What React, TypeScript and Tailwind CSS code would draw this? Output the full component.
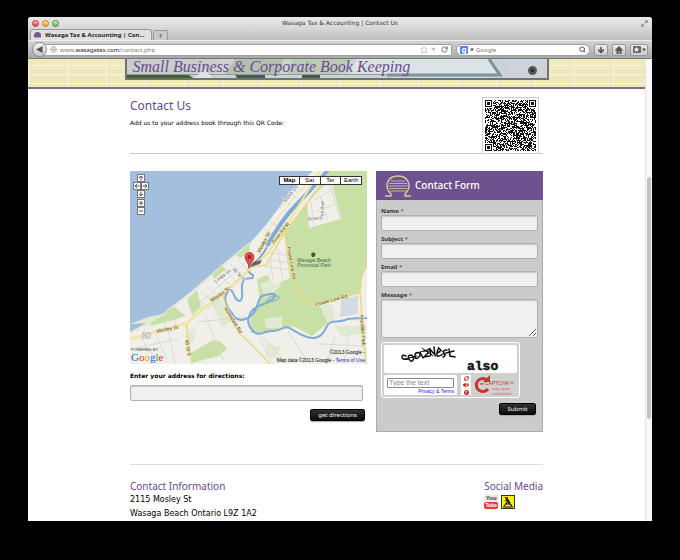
import React from "react";
import { ArrowDown, Home, Search, RotateCw, Star, Globe, Maximize2, RefreshCw, Volume2 } from "lucide-react";

const SANS = "font-['Noto_Sans',sans-serif]";
const inputBox =
  "block w-full rounded-[2px] border border-[#aeb1b4] bg-[#f0f0f0] px-1 text-[7px] text-[#333] shadow-[inset_0_1px_1px_#c5cbd0] outline-none";
const darkButton =
  "h-3 rounded-[2px] border border-black bg-gradient-to-b from-[#333] to-[#0c0c0c] text-[6px] leading-[10px] text-[#f4f4f4] shadow-[0_1px_1px_#aaa]";

function qrPath() {
  const n = 51;
  let seed = 91;
  let d = "";
  for (let y = 0; y < n; y++) {
    for (let x = 0; x < n; x++) {
      seed ^= seed << 13;
      seed ^= seed >>> 17;
      seed ^= seed << 5;
      const fx = x < 8 ? x : x > n - 9 ? n - 1 - x : -1;
      const fy = y < 8 ? y : y > n - 9 ? n - 1 - y : -1;
      const finder = fx >= 0 && fy >= 0 && !(x > 40 && y > 40);
      let on: boolean;
      if (finder) {
        const ring = Math.max(Math.abs(fx - 3), Math.abs(fy - 3));
        on = ring === 3 || ring <= 1;
      } else {
        on = ((seed >>> 9) & 15) < 9;
      }
      if (on) d += `M${x} ${y}h1v1h-1z`;
    }
  }
  return d;
}

function TrafficLight({ label, tone }: { label: string; tone: string }) {
  return <button aria-label={label} className={`size-[7px] rounded-full border shadow-[inset_0_2px_1px_rgba(255,255,255,0.6)] ${tone}`} />;
}

function BrowserChrome() {
  const tool = "flex h-3 items-center justify-center rounded-[2px] border border-[#999] bg-gradient-to-b from-[#eee] to-[#ccc] text-[#555]";
  return (
    <header className="text-[#333]">
      <div className="grid h-3 grid-cols-[1fr_auto_1fr] items-center rounded-t-[3px] bg-gradient-to-b from-[#e9e9e9] to-[#d6d6d6] px-1">
        <div className="flex gap-[3px]">
          <TrafficLight label="Close" tone="border-[#b8433c] bg-[#ef5048]" />
          <TrafficLight label="Minimize" tone="border-[#bd8427] bg-[#f3ae3c]" />
          <TrafficLight label="Zoom" tone="border-[#5b9145] bg-[#7fc25c]" />
        </div>
        <h1 className="text-[6px] leading-[10px] font-['DejaVu_Sans',sans-serif]">Wasaga Tax &amp; Accounting | Contact Us</h1>
        <Maximize2 className="size-[7px] justify-self-end text-[#777]" strokeWidth={3} />
      </div>
      <div className="flex h-[11px] items-end bg-gradient-to-b from-[#d6d6d6] to-[#bdbdbd] pl-[2px]">
        <div className="flex h-[11px] w-[122px] items-center gap-1 rounded-t-[3px] border border-b-0 border-[#999] bg-[#e0e0e0] px-[3px]">
          <span className="h-[6px] w-[7px] rounded-t-full border-b border-[#aaa] bg-[#74598f]" />
          <span className="truncate text-[6px] leading-[9px] font-bold text-[#222]">Wasaga Tax &amp; Accounting | Con…</span>
        </div>
        <button aria-label="New tab" className="ml-px h-[10px] w-[15px] rounded-t-[2px] border border-b-0 border-[#999] bg-[#cacaca] text-[9px] leading-[7px] text-[#666]">+</button>
      </div>
      <div className="flex h-[19px] items-center border-t border-b border-t-[#eee] border-b-[#777] bg-gradient-to-b from-[#d2d2d2] to-[#a9a9a9] pr-1 pl-1">
        <button aria-label="Back" className="z-10 flex size-[15px] shrink-0 items-center justify-center rounded-full border border-[#888] bg-gradient-to-b from-[#f5f5f5] to-[#c9c9c9]">
          <svg viewBox="0 0 8 8" className="size-[7px]"><path d="M7.5 0v8L0 4z" fill="#555" /></svg>
        </button>
        <div className="-ml-[3px] flex h-3 flex-1 items-center rounded-r-[2px] border border-[#a0a0a0] bg-white pr-[3px] pl-[5px]">
          <Globe className="size-[7px] shrink-0 text-[#999]" />
          <div className="ml-[3px] flex-1 text-[6px] leading-[10px]">
            <span className="text-[#777]">www.<span className="text-[#111]">wasagatax.com</span>/contact.php</span>
          </div>
          <Star className="size-2 text-[#aaa]" />
          <svg viewBox="0 0 8 8" className="ml-[3px] size-[5px]"><path d="M0 1h8L4 7z" fill="#c4c4c4" /></svg>
          <RotateCw className="ml-[5px] size-[7px] text-[#666]" strokeWidth={3} />
        </div>
        <div className="ml-1 flex h-3 w-[134px] items-center rounded-full border border-[#a0a0a0] bg-white px-[3px]">
          <span className="size-[8px] shrink-0 rounded-[1px] bg-[#4a85ee] text-center text-[8px] leading-[7px] font-bold text-white">g</span>
          <svg viewBox="0 0 8 8" className="mx-[2px] size-[4px] shrink-0"><path d="M0 1h8L4 7z" fill="#555" /></svg>
          <input aria-label="Search Google" placeholder="Google" className="h-[10px] min-w-0 flex-1 text-[6px] outline-none placeholder:text-[#777]" />
          <Search className="size-[7px] text-[#444]" strokeWidth={3} />
        </div>
        <button aria-label="Downloads" className={`${tool} ml-1 w-[14px]`}><ArrowDown className="size-2" strokeWidth={5} /></button>
        <button aria-label="Home" className={`${tool} ml-1 w-[14px]`}>
          <svg viewBox="0 0 16 16" className="size-2"><path d="M8 0l8 8-1 2-2-2v8H9v-5H7v5H3V8l-2 2-1-2z" fill="currentColor" /></svg>
        </button>
        <button aria-label="Bookmarks" className={`${tool} ml-1 w-[18px] gap-px`}>
          <span className="flex h-[7px] w-2 items-center justify-center rounded-[1px] bg-[#666]"><Star className="size-[5px] fill-white text-white" /></span>
          <svg viewBox="0 0 8 8" className="size-[4px]"><path d="M0 1h8L4 7z" fill="#555" /></svg>
        </button>
      </div>
    </header>
  );
}

function Banner() {
  return (
    <div className="h-[30px] border-b-2 border-[#8067a0] bg-[#eee9bd] bg-[linear-gradient(#f7f4dc_1px,transparent_1px),linear-gradient(90deg,#f7f4dc_1px,transparent_1px)] bg-[size:39px_9px] bg-[position:0_6px]">
      <div className="relative mx-auto h-[21px] w-[424px] border-2 border-t-0 border-[#707275] bg-[#cfd7da]">
        <svg viewBox="0 0 420 19" preserveAspectRatio="none" className="absolute inset-0 size-full">
          <rect width="420" height="19" fill="#cbd3d5" />
          <rect width="90" height="19" fill="#c9cecb" />
          <path d="M108 0h48l-4 16h-55z" fill="#b3c0ab" />
          <path d="M165 0h60l-12 16h-52z" fill="#bccab5" />
          <path d="M0 15h370v1H0z" fill="#8e9c9e" />
          <path d="M0 16h62l4 3H0zM108 16h30v3h-28zM175 16h18v3h-18z" fill="#435f35" />
          <path d="M66 19l12-8 8 8z" fill="#e1e4e4" />
          <path d="M230 0h130l10 15H222z" fill="#dbe3e4" />
          <path d="M362 0l11 16H260" fill="none" stroke="#7b949b" strokeWidth="3" />
          <path d="M375 0h45v17h-34z" fill="#ced3db" />
        </svg>
        <p className="relative pl-[6px] font-['Liberation_Serif',serif] text-[16px] leading-[15px] whitespace-nowrap text-[#694b92] italic">
          Small Business &amp; Corporate Book Keeping
        </p>
        <span className="absolute top-[7px] right-[10px] size-[9px] rounded-full border-[3px] border-[#555] bg-[#222]" />
      </div>
    </div>
  );
}

function MapDrawing() {
  const river =
    "M137 76Q132 86 123 93T123 104C124 110 118 105 114 109S113 120 112 126 107 131 104 124 99 117 96 124 99 138 103 144 112 150 118 147 126 139 128 132 132 124 140 123 146 127 138 131 124 135 120 143 119 156 123 160 131 163 136 161 146 161 151 158 158 156 163 159 174 166 182 167 194 162 197 155 209 152 215 149 228 148 238 147";
  const mosley = "M0 168L28 160 57 152 65 144 95 121 122 96 137 83 155 57 190 0";
  return (
    <svg viewBox="0 0 237 193" preserveAspectRatio="xMidYMid slice" className="block h-[193px] w-full bg-[#f0efe9] font-['Liberation_Sans',sans-serif] text-[5px]">
      <path d="M0 0H183L173 9 158 23 148 38 135 55 120 72 92 95 62 121 28 147 0 162z" fill="#a4bfdd" />
      <path d="M0 162L28 147 62 121 92 95 120 72" fill="none" stroke="#e9e8d8" strokeWidth="2" />
      <g fill="#c8dfa6">
        <path d="M199 0H237V96L232 105 230 121 190 134 198 152 182 165 163 155 143 161 121 162 120 150 130 130 127 108 151 99 155 62z" />
        <path d="M57 128l10-9 4 17-9 8zM82 104l10-9 4 3-12 10zM106 84l14-12-1 9-9 6z" />
        <path d="M61 182l22-13 8 2 6 7-8 7-28 7zM22 148l22-12 12 9-12 4-24 6z" />
      </g>
      <g fill="#e0e9d4">
        <path d="M56 160l10-3-2 14-8 2zM0 153l18-7 20-4-18 10zM130 113l18-8 3 11-16 11zM188 130l15 5 2 17-9-3zM134 148l18-3v12h-16zM137 172l13 4-3 12-12-4zM79 125l13 4 10 20-10 8zM205 155h31v8l-25 2z" />
      </g>
      <path d="M177 30l24-21 10 39-32 9zM154 62l6 45-16 7-12-18z" fill="#f0efe9" />
      <path d="M211 128l17-3v18l-18 3z" fill="#d2dce0" />
      <g fill="none" stroke="#dcdad5" strokeWidth="1">
        <path d="M65 125l14 13M71 120l14 13M77 115l14 14M83 109l13 14M89 103l14 14M95 98l13 15M101 93l13 14M107 88l12 12M71 131l44-39M78 137l43-38" />
        <path d="M135 88l24 4M135 95l25 4M138 81l21 4M140 85l3 25M148 78l5 34M150 37l14-16M160 34l-9-9M167 28l-10-9M139 50l11 6M134 58l11 7" />
        <path d="M181 31l22-13M184 41l22-8M190 25l8 25M200 14l9 31M10 166l16 23M25 161l12 28M38 157l7 36M5 177l44-9M75 144l18 45M67 151l49-5M118 142l23 48M132 165l23 25M158 160l18 28M205 165l-8 28M219 160l-5 33M190 173l44 2" />
        <path d="M181 31l3 25M162 126l-31 19M33 158l4-9M13 163l3-8M46 154l-5-14" />
      </g>
      <path d="M128 85L140 57 166 24 183 6" fill="none" stroke="#eee2a0" strokeWidth="1" />
      <path d={river} fill="none" stroke="#80aad9" strokeWidth="2" />
      <path d="M198-1Q180 20 166 34T137 75" fill="none" stroke="#80aad9" strokeWidth="4" />
      <path d="M135 133q5-10 12-8t-6 6" fill="none" stroke="#80aad9" strokeWidth="1" />
      <g fill="none" stroke="#e8d983" strokeWidth="2">
        <path d={mosley} />
        <path d="M122 96l14-2 19-33 48-62M155 61l3 29 9 31 15 13 48-12 2-18 5-10M230 122l6 71M92 122l6 20 11 20 13 12 18 19M56 152l6 41" strokeWidth="1.5" />
      </g>
      <path d={mosley} fill="none" stroke="#fff39d" strokeWidth="1" />
      <g fill="#4a4630" stroke="#f4ecae" strokeWidth="1" paintOrder="stroke">
        <text x="27" y="162" transform="rotate(-12 27 162)">Mosley St</text>
        <text x="82" y="131" transform="rotate(-35 82 131)">Mosley St</text>
        <text x="130" y="82" transform="rotate(-62 130 82)">Mosley St</text>
        <text x="144" y="73" transform="rotate(-52 144 73)">River Rd W</text>
        <text x="94" y="137" transform="rotate(59 94 137)">Sunnidale Rd</text>
        <text x="55" y="169" transform="rotate(80 55 169)">45 St S</text>
        <text x="157" y="76" transform="rotate(80 157 76)">Power Line Rd</text>
        <text x="186" y="135" transform="rotate(-15 186 135)">Power Line Rd</text>
        <text x="230" y="144" transform="rotate(86 230 144)">Klondike Park</text>
      </g>
      <g fill="#555" stroke="#fff" strokeWidth="0.6" paintOrder="stroke">
        <text x="155" y="32" transform="rotate(-50 155 32)">Shore Ln</text>
        <text x="86" y="112" transform="rotate(-38 86 112)">Linda Ln</text>
        <text x="102" y="98" transform="rotate(48 102 98)">36 St N</text>
        <text x="178" y="50" transform="rotate(-8 178 50)">River</text>
        <text x="193" y="49" transform="rotate(-86 193 49)">Run Ave</text>
      </g>
      <path d="M183 81l3 2-2 3h-2l-1-3z" fill="#355e40" />
      <g textAnchor="middle" fill="#3d6a45" fontStyle="italic">
        <text x="184" y="91">Wasaga Beach</text>
        <text x="184" y="96">Provincial Park</text>
      </g>
      <rect x="13" y="162" width="7" height="5" fill="#fff" stroke="#666" strokeWidth="0.5" />
      <text x="14" y="166" fontSize="4" fill="#444">92</text>
      <path d="M120 96l4-5 8-2-2 4z" fill="#333" opacity="0.7" />
      <path d="M119 97c0-5-4-7-4-11a4 4 0 0 1 9 0c0 4-4 6-5 11z" fill="#ef4c45" stroke="#9d2522" strokeWidth="0.7" />
      <text x="119.5" y="88" textAnchor="middle" fontWeight="bold" fontSize="6" fill="#501010">A</text>
    </svg>
  );
}

function MapKey({ label, d, place = "" }: { label: string; d: string; place?: string }) {
  return (
    <button aria-label={label} className={`size-[8px] border border-[#777] bg-[#fafafa] ${place}`}>
      <svg viewBox="0 0 6 6" className="block size-[6px]"><path d={d} fill="none" stroke="#555" /></svg>
    </button>
  );
}

function MapPanel() {
  const logo = [["G", "text-[#2962d1]"], ["o", "text-[#d23b33]"], ["o", "text-[#e5a91a]"], ["g", "text-[#2962d1]"], ["l", "text-[#2e9b46]"], ["e", "text-[#d23b33]"]];
  return (
    <div className="relative overflow-hidden">
      <MapDrawing />
      <div className="absolute top-[3px] left-[3px] grid grid-cols-2 justify-items-center">
        <MapKey label="Pan up" place="col-span-2" d="M3 5.500V1M1 3l2-2 2 2" />
        <MapKey label="Pan left" d="M5.500 3H1M3 1L1 3l2 2" />
        <MapKey label="Pan right" d="M.5 3H5M3 1l2 2-2 2" />
        <MapKey label="Pan down" place="col-span-2" d="M3 .5V5M1 3l2 2 2-2" />
        <MapKey label="Zoom in" place="col-span-2 mt-px" d="M1 3h4M3 1v4" />
        <MapKey label="Zoom out" place="col-span-2" d="M1 3h4" />
      </div>
      <div className="absolute top-[5px] right-[5px] grid w-[83px] grid-cols-4 font-['Liberation_Sans',sans-serif] text-[6px] leading-[7px] text-black">
        <button className="h-[9px] border border-[#333] bg-white font-bold">Map</button>
        <button className="h-[9px] border border-l-0 border-[#333] bg-white">Sat</button>
        <button className="h-[9px] border border-l-0 border-[#333] bg-white">Ter</button>
        <button className="h-[9px] border border-l-0 border-[#333] bg-white">Earth</button>
      </div>
      <div className="absolute bottom-[2px] left-px">
        <p className="font-['Liberation_Sans',sans-serif] text-[4px] leading-[4px] text-[#333]">POWERED BY</p>
        <p className="font-['Liberation_Serif',serif] text-[11px] leading-[10px]">
          {logo.map(([c, tone], i) => <span key={i} className={tone}>{c}</span>)}
        </p>
      </div>
      <div className="absolute right-[2px] bottom-0 text-right font-['Liberation_Sans',sans-serif] text-[5px] leading-2 text-black">
        <p>©2013 Google -</p>
        <p>Map data ©2013 Google - <a href="#terms" className="text-[#22c]">Terms of Use</a></p>
      </div>
    </div>
  );
}

function Field({ id, label, children }: { id: string; label: string; children: React.ReactNode }) {
  return (
    <div>
      <label htmlFor={id} className="block text-[6px] leading-2 font-bold text-[#333]">
        {label} <span className="text-[#70539a]">*</span>
      </label>
      {children}
    </div>
  );
}

function Captcha() {
  return (
    <div className="w-[139px] rounded-[3px] border border-white bg-[#d0d0d0] p-[2px]">
      <svg viewBox="0 0 133 28" role="img" aria-label="Captcha words" className="block h-[28px] w-full rounded-[2px] bg-white">
        <g fill="none" stroke="#111" strokeLinecap="round">
          <path d="M22 11q-4-2-4 1t6 2M27 10q-4 0-2 4t4 1-2-5M36 8q-5-2-5 3t5 0V7l3 6M40 6q5-1 4 2l-4 4 6-1M47 10l-2-7 6 7-1-8M53 8q5-2 3-4t-3 4 6 1M63 5q-5 0-3 3t-1 4M62 8l8-2M65 4l1 7 5 1" strokeWidth="1.500" />
          <path d="M21 14l12-3m5-8l11 8m5-9l8 8M33 8l13-4" />
        </g>
        <text x="83" y="25" className="font-['Liberation_Mono',monospace]" fontSize="13" fontWeight="bold" fill="#111" stroke="#111" strokeWidth="0.5">also</text>
      </svg>
      <div className="mt-[2px] flex gap-1">
        <div className="w-[75px] rounded-[2px] bg-white px-[3px] pt-[3px]">
          <input aria-label="Type the text" placeholder="Type the text" className="block h-[10px] w-full rounded-[1px] border border-[#888] bg-white pl-px font-['Liberation_Sans',sans-serif] text-[7px] outline-none placeholder:text-[#888]" />
          <a href="#privacy" className="block text-right font-['Liberation_Sans',sans-serif] text-[5px] leading-[7px] text-[#22e]">Privacy &amp; Terms</a>
        </div>
        <div className="flex w-[10px] flex-col items-center justify-between bg-[#eee] text-[#c3281e]">
          <button aria-label="New challenge" className="flex h-[6px] w-full items-center justify-center bg-white"><RefreshCw className="size-[5px]" strokeWidth={4} /></button>
          <button aria-label="Audio challenge" className="flex h-[6px] w-full items-center justify-center bg-white"><Volume2 className="size-[6px]" fill="currentColor" strokeWidth={3} /></button>
          <button aria-label="Help" className="flex h-[6px] w-full items-center justify-center bg-white"><span className="size-[5px] rounded-full bg-[#c3281e] text-center text-[4px] leading-[5px] font-bold text-white">?</span></button>
        </div>
        <svg viewBox="0 0 42 20" className="h-5 w-[42px] overflow-visible font-['Liberation_Sans',sans-serif]" role="img" aria-label="reCAPTCHA">
          <path d="M12 5A6.5 6.5 0 1 0 13 14" fill="none" stroke="#c8372d" strokeWidth="3" />
          <path d="M8 7h7V0z" fill="#c8372d" />
          <text x="5" y="10" fontSize="4" fontWeight="bold" fill="#a52820">re</text>
          <text x="10" y="10" fontSize="5" fill="#c8372d">CAPTCHA™</text>
          <text x="17" y="15" fontSize="4" fill="#d4645b">stop spam.</text>
          <text x="17" y="20" fontSize="4" fill="#d4645b">read books.</text>
        </svg>
      </div>
    </div>
  );
}

function ContactForm() {
  return (
    <form className="border border-[#aaa] bg-[#cbcbcb]" onSubmit={(e) => e.preventDefault()}>
      <div className="-mx-px -mt-px flex h-[29px] items-center gap-1 bg-[#6e528f] pl-[9px] text-white">
        <svg viewBox="0 0 26 22" className="h-[22px] w-[26px]">
          <g fill="none" stroke="#d9cba5">
            <path d="M0 21h6v-2C-2 11 3 1 13 1s15 10 7 18v2h6" strokeWidth="1.4" />
            <path d="M6 6h14M4 8.500h18M3 11h20M4 13.500h18M5 16h16" strokeWidth="0.8" />
          </g>
        </svg>
        <h2 className="pb-[2px] text-[10px] leading-3 font-medium">Contact Form</h2>
      </div>
      <div className="px-1 pt-[7px] pb-4">
        <div className="flex flex-col gap-1">
          <Field id="name" label="Name"><input id="name" className={`${inputBox} h-4`} /></Field>
          <Field id="subject" label="Subject"><input id="subject" className={`${inputBox} h-4`} /></Field>
          <Field id="email" label="Email"><input id="email" type="email" className={`${inputBox} h-4`} /></Field>
          <Field id="message" label="Message"><textarea id="message" className={`${inputBox} h-[39px] resize-y`} /></Field>
          <Captcha />
        </div>
        <div className="mt-[5px] flex justify-end pr-[2px]">
          <button className={`${darkButton} w-[37px]`}>Submit</button>
        </div>
      </div>
    </form>
  );
}

export default function App() {
  return (
    <div className={`min-h-screen bg-black px-7 pt-[17px] pb-[39px] ${SANS}`}>
      <div className="flex flex-col overflow-hidden rounded-t-[3px] bg-white">
        <BrowserChrome />
        <div className="flex">
          <div className="min-w-0 flex-1">
            <Banner />
            <main className="mx-auto w-[413px] text-[#222]">
              <section className="flex justify-between border-b border-[#ccc] pt-[8px]">
                <div>
                  <h2 className="text-[12px] leading-[18px] text-[#674a8e]">Contact Us</h2>
                  <p className="mt-[3px] font-['DejaVu_Sans',sans-serif] text-[6px] leading-[10px] text-black">Add us to your address book through this QR Code:</p>
                </div>
                <div className="mr-1 border border-b-0 border-[#ccc] p-[2px]">
                  <svg viewBox="0 0 51 51" role="img" aria-label="QR code" className="size-[51px]" shapeRendering="crispEdges"><path d={qrPath()} fill="#111" /></svg>
                </div>
              </section>
              <section className="mt-[17px] grid grid-cols-[237fr_167fr] items-start gap-[9px]">
                <div>
                  <MapPanel />
                  <form className="flex flex-col pt-2" onSubmit={(e) => e.preventDefault()}>
                    <label htmlFor="address" className="font-['DejaVu_Sans',sans-serif] text-[6px] leading-2 font-bold text-black">Enter your address for directions:</label>
                    <div className="mt-[5px] pr-1"><input id="address" className={`${inputBox} h-4`} /></div>
                    <button className={`${darkButton} mt-2 mr-[2px] w-[55px] self-end`}>get directions</button>
                  </form>
                </div>
                <ContactForm />
              </section>
              <footer className="mt-8 flex justify-between border-t border-[#ddd] pt-[14px]">
                <div className="font-['DejaVu_Sans',sans-serif] text-[8px] text-black">
                  <h2 className={`${SANS} text-[10px] leading-[14px] text-[#674a8e]`}>Contact Information</h2>
                  <p className="leading-[14px]">2115 Mosley St</p>
                  <p className="leading-[14px]">Wasaga Beach Ontario L9Z 1A2</p>
                </div>
                <div>
                  <h2 className="text-[10px] leading-[14px] text-[#674a8e]">Social Media</h2>
                  <div className="mt-[2px] flex gap-[3px]">
                    <a href="#youtube" aria-label="YouTube" className="flex size-[14px] flex-col overflow-hidden rounded-[1px] bg-[#e9e9e9] text-center font-['Liberation_Sans',sans-serif] text-[6px] leading-[7px] font-bold text-[#333]">
                      <span>You</span><span className="rounded-[2px] bg-[#dc3d3d] text-[5px] text-white">Tube</span>
                    </a>
                    <a href="#yellowpages" aria-label="Yellow Pages" className="size-[14px]">
                      <svg viewBox="0 0 14 14" className="size-full">
                        <rect x="0.5" y="0.5" width="13" height="13" fill="#f9ec19" stroke="#333" />
                        <path d="M4 2l3 4M6 2l1 4M4 6l3-1 2 3M7 6l-4 5M7 7l4 4M5 9h4M2 12h10" fill="none" stroke="#111" strokeWidth="1.1" />
                      </svg>
                    </a>
                  </div>
                </div>
              </footer>
            </main>
          </div>
          <div className="flex w-[7px] flex-col items-center border-l border-[#e4e4e4] bg-[#f8f8f8]">
            <div className="mt-[118px] h-[242px] w-1 rounded-full bg-[#c1c1c1]" />
          </div>
        </div>
      </div>
    </div>
  );
}
